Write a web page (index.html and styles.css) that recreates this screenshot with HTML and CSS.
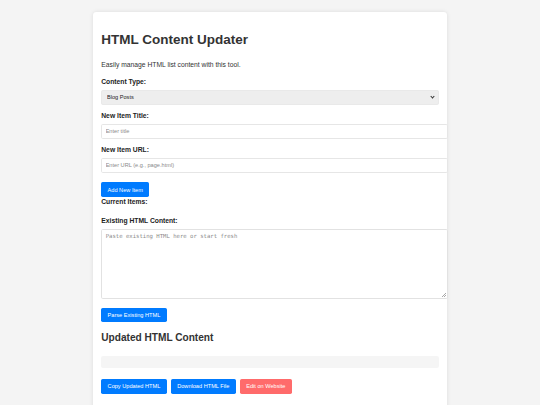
FILE: index.html
```html
<!DOCTYPE html>
<html lang="en">
<head>
<meta charset="utf-8">
<title>HTML Content Updater</title>
<link rel="stylesheet" href="styles.css">
</head>
<body>
<div class="container">
  <h1>HTML Content Updater</h1>
  <p class="intro">Easily manage HTML list content with this tool.</p>

  <label class="label" for="type">Content Type:</label>
  <div class="select-wrap">
    <select class="select" id="type">
      <option>Blog Posts</option>
      <option>Products</option>
      <option>Links</option>
    </select>
  </div>

  <label class="label" for="title">New Item Title:</label>
  <input class="field input" id="title" type="text" placeholder="Enter title">

  <label class="label" for="url">New Item URL:</label>
  <input class="field input" id="url" type="text" placeholder="Enter URL (e.g., page.html)">

  <div class="btn-line add-line">
    <button class="btn">Add New Item</button>
  </div>

  <div class="current">
    <strong>Current Items:</strong>
  </div>

  <label class="label" for="existing">Existing HTML Content:</label>
  <textarea class="field area" id="existing" placeholder="Paste existing HTML here or start fresh"></textarea>

  <div class="btn-line">
    <button class="btn">Parse Existing HTML</button>
  </div>

  <h2>Updated HTML Content</h2>
  <pre class="output"></pre>

  <div class="actions">
    <button class="btn">Copy Updated HTML</button>
    <button class="btn">Download HTML File</button>
    <button class="btn btn-edit">Edit on Website</button>
  </div>
</div>
</body>
</html>
```

FILE: styles.css
```css
body {
  margin: 3.375px;
  background: #f4f4f4;
  font-family: "Liberation Sans", Arial, sans-serif;
  font-size: 6.75px;
  line-height: 1.6;
  color: #333;
}

.container {
  max-width: 337.5px;
  margin: 8.44px auto;
  padding: 8.44px;
  background: #fff;
  border-radius: 3.4px;
  box-shadow: 0 0 4.2px rgba(0, 0, 0, 0.1);
}

h1 {
  font-size: 13.5px;
  margin: 8.86px 0;
  color: #333;
}

.intro {
  margin: 6.75px 0;
}

.label {
  display: block;
  font-weight: bold;
  margin-bottom: 2.11px;
  color: #222;
}

.select-wrap {
  position: relative;
  margin-bottom: 6.33px;
}

.select-wrap::after {
  content: "";
  position: absolute;
  right: 4.3px;
  top: 5.2px;
  width: 2px;
  height: 2px;
  border-right: 1.1px solid #333;
  border-bottom: 1.1px solid #333;
  transform: rotate(45deg);
  pointer-events: none;
}

.select {
  display: block;
  width: 100%;
  height: 14.75px;
  box-sizing: border-box;
  padding: 0 4.7px;
  border: 1px solid #e9e9e9;
  border-radius: 1.7px;
  background: #eeeeee;
  appearance: none;
  font-family: "Liberation Sans", Arial, sans-serif;
  font-size: 5.625px;
  color: #222;
}

.field {
  display: block;
  margin: 0 0 6.33px;
  font-family: "Liberation Sans", Arial, sans-serif;
  font-size: 5.625px;
  color: #333;
}

.input {
  width: 100%;
  padding: 3.375px;
  line-height: 5.25px;
  border: 1px solid #e6e6e6;
  border-radius: 1.7px;
  background: #fff;
}

.area {
  width: 100%;
  height: 61.5px;
  padding: 3.375px;
  line-height: 1.15;
  border: 1px solid #e2e2e2;
  border-radius: 1.7px;
  font-family: "DejaVu Sans Mono", monospace;
  margin-bottom: 8.45px;
  resize: none;
  background:
    linear-gradient(135deg, transparent 0 50%, #a8a8a8 50% 60%, transparent 60% 75%, #a8a8a8 75% 85%, transparent 85%)
    no-repeat right 1px bottom 1px / 4px 4px,
    #fff;
}

.input::placeholder,
.area::placeholder {
  color: #8a8a8a;
}

.btn-line {
  display: flex;
}

.add-line {
  margin-top: 9.6px;
}

.btn {
  padding: 4.22px 6.33px;
  border: none;
  border-radius: 1.7px;
  background: #007bff;
  color: #fff;
  font-family: "Liberation Sans", Arial, sans-serif;
  font-size: 5.625px;
  line-height: 6.33px;
  cursor: pointer;
}

.btn-edit {
  background: #ff6b6b;
}

.current {
  margin-bottom: 8.2px;
  color: #222;
}

h2 {
  font-size: 10.125px;
  margin: 7.3px 0 9.75px;
  color: #333;
}

.output {
  margin: 0 0 10.64px;
  padding: 6.33px;
  background: #f5f5f5;
  border-radius: 2.1px;
}

.actions {
  display: flex;
  gap: 4.22px;
  margin-bottom: 8px;
}
```
